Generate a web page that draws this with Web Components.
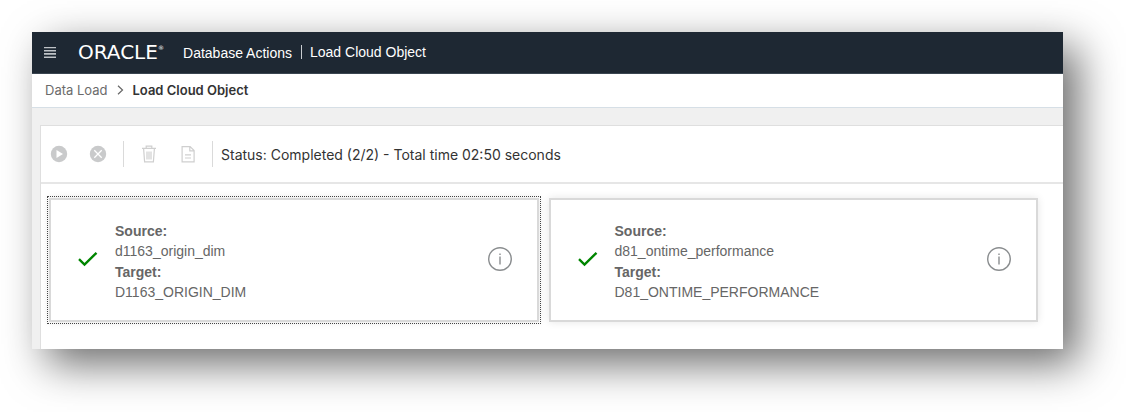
<!DOCTYPE html>
<html lang="en">
<head>
<meta charset="utf-8">
<title>Load Cloud Object</title>
<style>
    body {
        margin: 0;
        padding: 32px 63px 63px 32px;
        background: #fff;
        font-family: "Liberation Sans", Arial, sans-serif;
        font-size: 14px;
    }
</style>
</head>
<body>

<template id="app-window">
    <style>
        :host {
            display: block;
            background: #f0f0f0;
            box-shadow: 15px 15px 40px rgba(0, 0, 0, .58);
        }
        main {
            margin: 17px 0 0 8px;
            border: solid #dfdfdf;
            border-width: 1px 0 0 1px;
            background: #fff;
        }
        .cards {
            display: grid;
            grid-template-columns: 1fr 1fr;
            gap: 10px;
            padding: 14px 25px 27px 8px;
        }
    </style>
    <slot name="header"></slot>
    <slot name="path"></slot>
    <main>
        <slot name="toolbar"></slot>
        <div class="cards"><slot></slot></div>
    </main>
</template>

<template id="app-header">
    <style>
        :host { display: block; }
        header {
            display: flex;
            align-items: center;
            height: 41px;
            padding: 0 12px;
            border-bottom: 1px solid #3a4550;
            background: #1e2833;
            color: #fff;
            line-height: 20px;
        }
        button {
            display: flex;
            padding: 0;
            border: 0;
            background: none;
        }
        .logo {
            display: flex;
            justify-content: space-between;
            box-sizing: border-box;
            min-width: 245px;
            padding: 0 9px 0 22px;
        }
        .brand {
            display: flex;
            font: 20px/20px "DejaVu Sans", sans-serif;
        }
        .brand small {
            font-size: 6px;
            line-height: 12px;
        }
        .product { padding-top: 1px; }
        .page {
            display: flex;
            align-items: center;
            gap: 8px;
            padding-bottom: 2px;
        }
        .bar {
            width: 1px;
            height: 14px;
            background: #c9ccd0;
        }
    </style>
    <header>
        <button aria-label="Menu">
            <svg width="12" height="12" viewBox="0 0 12 12" fill="#bfc3c7">
                <path d="M0 0h12v1.200H0zM0 3h12v1.500H0zM0 6h12v1.700H0zM0 9.500h12v1.500H0z"/>
            </svg>
        </button>
        <div class="logo">
            <span class="brand">ORACLE<small>®</small></span>
            <span class="product"><slot name="product"></slot></span>
        </div>
        <div class="page"><span class="bar"></span><slot></slot></div>
    </header>
</template>

<template id="path-bar">
    <style>
        :host { display: block; }
        nav {
            display: flex;
            align-items: center;
            gap: 9px;
            height: 31px;
            padding: 0 13px 2px;
            border-bottom: 1px solid #d6dfe6;
            background: #fff;
            color: #333;
            font: 13px/18px Inter, sans-serif;
        }
        a {
            color: #6b6b6b;
            text-decoration: none;
        }
        strong { font-weight: 600; }
    </style>
    <nav aria-label="Breadcrumb">
        <a href="#"></a>
        <svg width="7" height="10" viewBox="0 0 7 10" fill="none" stroke="#666" stroke-width="1.200"><path d="M1 .8 5.500 5 1 9.200"/></svg>
        <strong><slot></slot></strong>
    </nav>
</template>

<template id="load-toolbar">
    <style>
        :host {
            display: flex;
            align-items: center;
            height: 56px;
            padding: 0 8px;
            border-bottom: 2px solid #e6e6e6;
            color: #333;
            font: 14px/20px Inter, sans-serif;
        }
        .group {
            display: flex;
            gap: 19px;
        }
        button {
            display: flex;
            padding: 0;
            border: 0;
            background: none;
        }
        .bar {
            width: 1px;
            height: 26px;
            margin: 0 15px;
            background: #dadada;
        }
        .bar.last { margin: 0 8px 0 14px; }
        output { padding-top: 2px; }
    </style>
    <div class="group">
        <button disabled aria-label="Start">
            <svg width="20" height="20" viewBox="0 0 20 20"><circle cx="10" cy="10" r="8.200" fill="#c9cacb"/><path d="M7.500 6v8l6.500-4z" fill="#fff"/></svg>
        </button>
        <button disabled aria-label="Stop">
            <svg width="20" height="20" viewBox="0 0 20 20"><circle cx="10" cy="10" r="8.200" fill="#c9cacb"/><path d="m6.300 6.300 7.400 7.400m0-7.400-7.400 7.400" stroke="#fff" stroke-width="1.300"/></svg>
        </button>
    </div>
    <span class="bar"></span>
    <div class="group">
        <button disabled aria-label="Remove">
            <svg width="20" height="20" viewBox="0 0 20 20" fill="none" stroke="#cfcfcf" stroke-width="1.200">
                <path d="M3 4.300h14M7.200 4V2.100h5.600V4M4.600 4.500l1 13.400h8.800l1-13.400M8 7.500v8M10 7.500v8M12 7.500v8"/>
            </svg>
        </button>
        <button disabled aria-label="Report">
            <svg width="20" height="20" viewBox="0 0 20 20" fill="none" stroke="#cfcfcf" stroke-width="1.200">
                <path d="M4.100 2.600h8l4 4v11.300h-12zM11.800 2.800v4.100h4.100M7 10.800h6M7 14h6"/>
            </svg>
        </button>
    </div>
    <span class="bar last"></span>
    <output><slot></slot></output>
</template>

<template id="load-card">
    <style>
        :host {
            display: flex;
            align-items: center;
            padding: 15px 24px 17px 27px;
            border: 2px solid #d9d9d9;
            background: #fff;
            box-shadow: 0 0 8px rgba(0, 0, 0, .1);
            color: #666;
        }
        :host([selected]) {
            outline: 1px dotted #444;
            outline-offset: 1px;
        }
        dl {
            flex: 1;
            margin: 6px 0 0 17px;
        }
        dt {
            font-weight: bold;
            line-height: 20px;
        }
        dd {
            margin: 0;
            line-height: 21px;
        }
        button {
            display: flex;
            padding: 0;
            border: 0;
            background: none;
        }
    </style>
    <svg width="20" height="16" viewBox="0 0 20 16" fill="none" stroke="#008500" stroke-width="2.400" role="img" aria-label="Completed"><path d="m1 8.200 5.500 5.300L18.500 1.800"/></svg>
    <dl>
        <dt>Source:</dt>
        <dd><slot name="source"></slot></dd>
        <dt>Target:</dt>
        <dd><slot name="target"></slot></dd>
    </dl>
    <button aria-label="Details">
        <svg width="26" height="26" viewBox="0 0 26 26" fill="none" stroke="#8a8d8f" stroke-width="1.400"><circle cx="13" cy="13" r="11.300"/><path d="M13 10.500v8M13 7.600v1.500"/></svg>
    </button>
</template>

<app-window>
    <app-header slot="header"><span slot="product">Database Actions</span>Load Cloud Object</app-header>
    <path-bar slot="path" parent="Data Load">Load Cloud Object</path-bar>
    <load-toolbar slot="toolbar">Status: Completed (2/2) - Total time 02:50 seconds</load-toolbar>
    <load-card selected>
        <span slot="source">d1163_origin_dim</span>
        <span slot="target">D1163_ORIGIN_DIM</span>
    </load-card>
    <load-card>
        <span slot="source">d81_ontime_performance</span>
        <span slot="target">D81_ONTIME_PERFORMANCE</span>
    </load-card>
</app-window>

<script>
    class TemplateElement extends HTMLElement {
        constructor() {
            super()
            const template = document.getElementById(this.localName).content
            this.attachShadow({ mode: 'open' }).appendChild(template.cloneNode(true))
        }
    }

    class AppWindow extends TemplateElement {}
    class AppHeader extends TemplateElement {}
    class LoadToolbar extends TemplateElement {}
    class LoadCard extends TemplateElement {}

    class PathBar extends TemplateElement {
        static get observedAttributes() {
            return ['parent']
        }

        attributeChangedCallback(name, oldValue, newValue) {
            this.shadowRoot.querySelector('a').textContent = newValue == null ? '' : newValue
        }
    }

    customElements.define('app-window', AppWindow)
    customElements.define('app-header', AppHeader)
    customElements.define('path-bar', PathBar)
    customElements.define('load-toolbar', LoadToolbar)
    customElements.define('load-card', LoadCard)
</script>
</body>
</html>
